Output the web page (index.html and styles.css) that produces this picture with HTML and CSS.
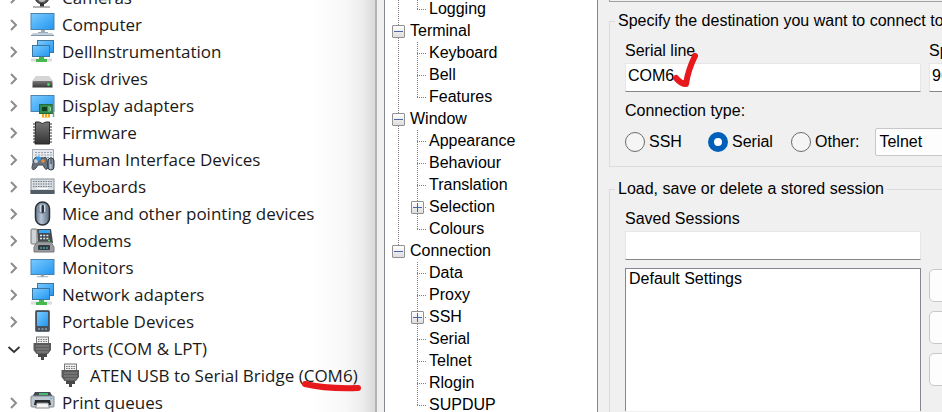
FILE: index.html
```html
<!DOCTYPE html>
<html lang="en">
<head>
<meta charset="utf-8">
<title>Serial port setup</title>
<link rel="stylesheet" href="styles.css">
</head>
<body>
<svg class="defs" aria-hidden="true">
  <defs>
    <linearGradient id="blue" x1="0" y1="0" x2="1" y2="1"><stop offset="0" stop-color="#7ccbff"/><stop offset="1" stop-color="#2196f0"/></linearGradient>
    <linearGradient id="dark" x1="0" y1="0" x2="0" y2="1"><stop offset="0" stop-color="#777"/><stop offset="1" stop-color="#333"/></linearGradient>
    <linearGradient id="steel" x1="0" y1="0" x2="1" y2="0"><stop offset="0" stop-color="#66788e"/><stop offset=".4" stop-color="#b6c4d4"/><stop offset="1" stop-color="#5c6b7e"/></linearGradient>
  </defs>
  <symbol id="chevron" viewBox="0 0 12 14"><path d="M3 2l5 5-5 5" fill="none" stroke="#8c8c8c" stroke-width="2"/></symbol>
  <symbol id="chevron-open" viewBox="0 0 14 14"><path d="M1.500 5l5.500 5 5.500-5" fill="none" stroke="#333" stroke-width="1.800"/></symbol>
  <symbol id="camera" viewBox="0 0 26 26"><circle cx="12" cy="12" r="7" fill="#555" stroke="#333"/><circle cx="12" cy="13" r="4" fill="#bbb"/><path d="M10 18h4v4h-4z" fill="#333"/><path d="M3 22h17" stroke="#999" stroke-width="1.500"/></symbol>
  <symbol id="computer" viewBox="0 0 26 26"><rect x="1" y="1.500" width="23" height="16" fill="url(#blue)" stroke="#4d83ad"/><path d="M11 18h4v2h3v1H8v-1h3z" fill="#9aabb9"/><path d="M3 21h19l2 2H1z" fill="#c3d0dc"/><path d="M1 23.500h23" stroke="#8296a8"/></symbol>
  <symbol id="network" viewBox="0 0 26 26"><rect x="7.500" y="1.500" width="16" height="12" fill="url(#blue)" stroke="#3c759e"/><rect x="2.500" y="6.500" width="17" height="11" fill="url(#blue)" stroke="#3c759e"/><path d="M1 19.500h21v3H1z" fill="#dcdcdc"/><path d="M9 18h5v2h3v3H6v-3h3z" fill="#45b84e"/></symbol>
  <symbol id="disk" viewBox="0 0 26 26"><path d="M6 10h13l4 5H2z" fill="#d5d5d5"/><rect x="2.500" y="15" width="20" height="7" rx="1" fill="url(#dark)"/><path d="M3 21.500h19" stroke="#999"/><circle cx="18.500" cy="18.500" r="1.300" fill="#46ef59"/></symbol>
  <symbol id="display" viewBox="0 0 26 26"><rect x="1" y="2.500" width="23" height="16" fill="url(#blue)" stroke="#4d83ad"/><rect x="9.500" y="11.500" width="13" height="9" fill="#2f8a4d" stroke="#236c3c"/><rect x="12" y="14" width="5" height="4" fill="#143c23"/><path d="M19 13v6M20.500 14v4" stroke="#8fd49f"/><path d="M12 21h8v3.500h-8z" fill="#f0a51c"/><path d="M14.500 21v3M17.500 21v3" stroke="#fff3c9"/><path d="M23.500 9v15" stroke="#8a9099" stroke-width="1.500"/></symbol>
  <symbol id="firmware" viewBox="0 0 26 26"><path d="M3 4h19M3 7h19M3 10h19M3 13h19M3 16h19M3 19h19M3 22h19" stroke="#777" stroke-width="1.500"/><path d="M5.500 2H9q3.500 3 7 0h3.500v22h-14.500z" fill="url(#dark)" stroke="#2b2b2b"/></symbol>
  <symbol id="hid" viewBox="0 0 26 26"><rect x="2.500" y="2.500" width="21" height="12" fill="#e5e9ed" stroke="#a5adb5"/><path d="M5 5.500h17M5 8h17M5 10.500h17" stroke="#9aa3ad" stroke-dasharray="2 1"/><path d="M4 12q2-3 5-1h4q3-2 4 1l1 9q-2 3-4-1l-1-2H8l-2 3q-4 4-4-1z" fill="#69727c" stroke="#434a53"/><circle cx="6" cy="14" r="2" fill="#cbd4dd"/><circle cx="8.500" cy="11.500" r="2.300" fill="#2e9ff2"/><circle cx="13" cy="14" r="1.700" fill="#ef8a35"/><rect x="18" y="11" width="6" height="12" rx="3" fill="url(#steel)" stroke="#303943"/><path d="M21 12v5" stroke="#263340"/></symbol>
  <symbol id="keyboard" viewBox="0 0 26 26"><rect x="1" y="5" width="23" height="14" fill="#d9dee3" stroke="#87919b"/><path d="M3 7.500h20M3 10h20M3 12.500h20" stroke="#717b85" stroke-dasharray="1.500 1"/><path d="M7 14.500h11" stroke="#fff"/><path d="M.5 16h24v4H.5z" fill="#535d67"/></symbol>
  <symbol id="mouse" viewBox="0 0 26 26"><rect x="5.500" y="1" width="14" height="23" rx="7" fill="url(#steel)" stroke="#2d3137" stroke-width="1.500"/><path d="M9 3h7v8q-3.500 3-7 0z" fill="#d3dce5" stroke="#66788a"/><rect x="11.500" y="4" width="2.500" height="8" rx="1" fill="#2b3440"/></symbol>
  <symbol id="modem" viewBox="0 0 26 26"><path d="M7 1h14l2 14H8z" fill="#454b52"/><rect x="1" y="1" width="6" height="15" rx="1" fill="#d0d3d6" stroke="#777"/><rect x="9" y="2" width="11" height="3" fill="#38a6f2"/><path d="M10 7.500h9M10 10.500h9" stroke="#dfe6ec" stroke-width="1.500" stroke-dasharray="2 1.200"/><circle cx="19" cy="12.500" r="1" fill="#51df58"/><path d="M7 14h14l3 5v5H4v-5z" fill="#999da1" stroke="#777"/><rect x="8" y="17" width="12" height="5" rx="1" fill="#353a40"/><path d="M10 20h8" stroke="#4ed2ca" stroke-dasharray="2 1"/></symbol>
  <symbol id="monitor" viewBox="0 0 26 26"><rect x="1" y="4.500" width="23" height="15" fill="url(#blue)" stroke="#4d83ad"/><path d="M11 20h3v1.500h4V22H7v-.5h4z" fill="#8fa3b4" stroke="#aab8c4" stroke-width=".5"/></symbol>
  <symbol id="portable" viewBox="0 0 26 26"><rect x="5.500" y="1.500" width="14" height="21" rx="1" fill="#46505b" stroke="#5f6c79"/><rect x="7" y="3" width="11" height="14" fill="url(#blue)"/><path d="M8 20h2M11.500 20h2M15 20h2" stroke="#c0c9d2"/></symbol>
  <symbol id="port" viewBox="0 0 26 26"><rect x="6.500" y="1" width="12" height="7" fill="#efefef" stroke="#777"/><path d="M8 3.500h9M8 5.500h9" stroke="#777" stroke-dasharray="1.500 1"/><path d="M3.500 7h17.500v7l-3 4H6.500l-3-4z" fill="#5b5b5b"/><path d="M6 10h13M6 13h13M7 16h11" stroke="#8c8c8c"/><path d="M8 18h9v3h-3v3h-3v-3H8z" fill="#484848"/></symbol>
  <symbol id="printer" viewBox="0 0 26 26"><path d="M5 2h15l3 5H2z" fill="#434a50"/><path d="M9 4h9" stroke="#49df82" stroke-width="1.500"/><rect x="1" y="6" width="23" height="11" rx="1" fill="#bfc7ce" stroke="#818b94"/><path d="M5 10h15l1 5H4z" fill="#26292d"/><path d="M7 13h11l1.500 5H5.500z" fill="#f4f4f4" stroke="#888"/><circle cx="21" cy="8.500" r="1" fill="#57b9ee"/></symbol>
</svg>

<main class="screen">
  <section class="devices" aria-label="Devices">
    <ul class="device-list">
      <li><svg class="arrow"><use href="#chevron"/></svg><svg class="icon"><use href="#camera"/></svg><span>Cameras</span></li>
      <li><svg class="arrow"><use href="#chevron"/></svg><svg class="icon"><use href="#computer"/></svg><span>Computer</span></li>
      <li><svg class="arrow"><use href="#chevron"/></svg><svg class="icon"><use href="#network"/></svg><span>DellInstrumentation</span></li>
      <li><svg class="arrow"><use href="#chevron"/></svg><svg class="icon"><use href="#disk"/></svg><span>Disk drives</span></li>
      <li><svg class="arrow"><use href="#chevron"/></svg><svg class="icon"><use href="#display"/></svg><span>Display adapters</span></li>
      <li><svg class="arrow"><use href="#chevron"/></svg><svg class="icon"><use href="#firmware"/></svg><span>Firmware</span></li>
      <li><svg class="arrow"><use href="#chevron"/></svg><svg class="icon"><use href="#hid"/></svg><span>Human Interface Devices</span></li>
      <li><svg class="arrow"><use href="#chevron"/></svg><svg class="icon"><use href="#keyboard"/></svg><span>Keyboards</span></li>
      <li><svg class="arrow"><use href="#chevron"/></svg><svg class="icon"><use href="#mouse"/></svg><span>Mice and other pointing devices</span></li>
      <li><svg class="arrow"><use href="#chevron"/></svg><svg class="icon"><use href="#modem"/></svg><span>Modems</span></li>
      <li><svg class="arrow"><use href="#chevron"/></svg><svg class="icon"><use href="#monitor"/></svg><span>Monitors</span></li>
      <li><svg class="arrow"><use href="#chevron"/></svg><svg class="icon"><use href="#network"/></svg><span>Network adapters</span></li>
      <li><svg class="arrow"><use href="#chevron"/></svg><svg class="icon"><use href="#portable"/></svg><span>Portable Devices</span></li>
      <li><svg class="arrow"><use href="#chevron-open"/></svg><svg class="icon"><use href="#port"/></svg><span>Ports (COM &amp; LPT)</span></li>
      <li class="nested"><svg class="icon"><use href="#port"/></svg><span>ATEN USB to Serial Bridge <span class="marked">(COM6)<svg class="underline" viewBox="0 0 64 12"><path d="M5 4Q25 9 58 8" fill="none" stroke="#e8191c" stroke-width="6" stroke-linecap="round"/></svg></span></span></li>
      <li><svg class="arrow"><use href="#chevron"/></svg><svg class="icon"><use href="#printer"/></svg><span>Print queues</span></li>
    </ul>
  </section>

  <nav class="categories" aria-label="Category">
    <ul class="tree">
      <li class="branch">
        <ul><li>Logging</li></ul>
      </li>
      <li class="branch">
        <div class="node"><button class="toggle" type="button" aria-label="Collapse Terminal"></button>Terminal</div>
        <ul><li>Keyboard</li><li>Bell</li><li>Features</li></ul>
      </li>
      <li class="branch">
        <div class="node"><button class="toggle" type="button" aria-label="Collapse Window"></button>Window</div>
        <ul><li>Appearance</li><li>Behaviour</li><li>Translation</li><li class="folded"><button class="toggle plus" type="button" aria-label="Expand Selection"></button>Selection</li><li>Colours</li></ul>
      </li>
      <li class="branch">
        <div class="node"><button class="toggle" type="button" aria-label="Collapse Connection"></button>Connection</div>
        <ul><li>Data</li><li>Proxy</li><li class="folded"><button class="toggle plus" type="button" aria-label="Expand SSH"></button>SSH</li><li>Serial</li><li>Telnet</li><li>Rlogin</li><li>SUPDUP</li></ul>
      </li>
    </ul>
  </nav>

  <form class="session">
    <div class="banner"></div>
    <fieldset>
      <legend>Specify the destination you want to connect to</legend>
      <div class="columns">
        <div class="field marked">
          <label for="line">Serial line</label>
          <input class="text" id="line" type="text" value="COM6">
          <svg class="tick" viewBox="0 0 28 36"><path d="M4 25Q9 31 14 31Q16 17 23 3" fill="none" stroke="#e8191c" stroke-width="6" stroke-linecap="round" stroke-linejoin="round"/></svg>
        </div>
        <div class="field">
          <label for="speed">Speed</label>
          <input class="text" id="speed" type="text" value="9600">
        </div>
      </div>
      <div class="caption">Connection type:</div>
      <div class="choices">
        <label><input type="radio" name="type">SSH</label>
        <label><input type="radio" name="type" checked>Serial</label>
        <label><input type="radio" name="type">Other:</label>
        <select aria-label="Other connection type"><option>Telnet</option></select>
      </div>
    </fieldset>
    <fieldset class="stored">
      <legend>Load, save or delete a stored session</legend>
      <div class="columns">
        <div class="field">
          <label for="saved">Saved Sessions</label>
          <input class="text" id="saved" type="text">
        </div>
      </div>
      <div class="columns lists">
        <select class="sessions" size="6" aria-label="Stored sessions"><option>Default Settings</option></select>
        <div class="actions">
          <button type="button" aria-label="Load"></button>
          <button type="button" aria-label="Save"></button>
          <button type="button" aria-label="Delete"></button>
        </div>
      </div>
    </fieldset>
  </form>
</main>
</body>
</html>
```
FILE: styles.css
```css
* { box-sizing: border-box; }
body { margin: 0; color: #000; background: #fff; font: 16px/22px "Liberation Sans", Arial, sans-serif; }
ul { list-style: none; margin: 0; padding: 0; }
input, select, button { font: inherit; color: inherit; margin: 0; }
.defs { position: absolute; width: 0; height: 0; }

.screen {
  display: grid;
  grid-template-columns: minmax(0, 377fr) minmax(0, 221fr) minmax(0, 344fr);
  height: 100vh;
  overflow: hidden;
  background: #f0f0f0;
}
.screen > * { min-height: 0; overflow: hidden; }

/* Device list */
.devices {
  border-right: 2px solid #b4b4b4;
  background: linear-gradient(to left, #d9d9d9, #ececec 12px, #f8f8f8 30px, #fff 64px);
  font: 17px/27px "Open Sans", "Segoe UI", sans-serif;
  color: #1a1a1a;
}
.device-list { margin-top: -16px; }
.device-list li { display: flex; align-items: center; height: 27px; padding-left: 7px; white-space: nowrap; }
.device-list .nested { padding-left: 58px; }
.arrow { width: 14px; height: 14px; margin-right: 9px; flex: none; }
.icon { width: 26px; height: 26px; margin-right: 6px; flex: none; }
.marked { position: relative; }
.underline { position: absolute; right: -6px; bottom: -5px; width: 64px; height: 12px; }

/* Category tree */
.categories { margin-left: 7px; border: solid #828790; border-width: 0 1px; background: #fff; }
.tree { margin-top: -2px; }
.branch {
  background: repeating-linear-gradient(#808080 0 1px, transparent 1px 2px) 13px 0 / 1px 100% no-repeat;
}
.branch:last-child { background-size: 1px 12px; }
.node { display: flex; align-items: center; gap: 5px; height: 22px; padding-left: 7px; }
.branch ul li {
  display: flex;
  align-items: center;
  height: 22px;
  padding-left: 44px;
  background:
    repeating-linear-gradient(#808080 0 1px, transparent 1px 2px) 32px 0 / 1px 100% no-repeat,
    repeating-linear-gradient(90deg, #808080 0 1px, transparent 1px 2px) 32px 11px / 9px 1px no-repeat;
}
.branch ul li:last-child { background-size: 1px 12px, 9px 1px; }
.branch ul .folded { gap: 5px; padding-left: 26px; }
.toggle {
  width: 13px;
  height: 13px;
  padding: 0;
  border: 1px solid #919191;
  border-radius: 1px;
  background:
    linear-gradient(#4b63a7, #4b63a7) center / 9px 1px no-repeat,
    linear-gradient(#fff, #ddd);
}
.toggle.plus {
  background:
    linear-gradient(#4b63a7, #4b63a7) center / 9px 1px no-repeat,
    linear-gradient(#4b63a7, #4b63a7) center / 1px 9px no-repeat,
    linear-gradient(#fff, #ddd);
}

/* Session form */
.session { padding-left: 11px; white-space: nowrap; }
.banner { height: 2px; margin-bottom: 8px; border-bottom: 1px solid #a0a0a0; border-left: 1px solid #a0a0a0; }
fieldset { min-width: 0; margin: 0 -110px 0 0; padding: 0 15px 10px; border: 1px solid #dcdcdc; }
legend { margin-left: -10px; padding: 0 3px; }
.columns { display: grid; grid-template-columns: minmax(0, 1fr) 107px; gap: 8px; }
.field { display: flex; flex-direction: column; gap: 1px; padding-top: 8px; }
.text { width: 100%; height: 29px; padding: 0 2px 3px; border: 1px solid #e6e6e6; border-bottom-color: #868686; background: #fff; }
.tick { position: absolute; left: 47px; top: 21px; width: 28px; height: 36px; }
.caption { margin-top: 8px; }
.choices { display: flex; align-items: center; gap: 16px; margin-top: 6px; }
.choices label { display: flex; align-items: center; gap: 4px; min-width: 67px; }
.choices input { appearance: none; width: 20px; height: 20px; border: 1px solid #6b6b6b; border-radius: 50%; background: #f5f5f5; }
.choices input:checked { border: 6px solid #005fb8; background: #fff; }
.choices select { appearance: none; width: 160px; height: 28px; padding: 0 3px; border: 1px solid #c8c8c8; border-radius: 2px; background: #fdfdfd; }
.stored { margin-top: 11px; }
.lists { margin-top: 8px; }
.sessions { height: 143px; padding: 1px 0; border: 1px solid #828790; border-bottom: 0; border-radius: 0; background: #fff; overflow: hidden; }
.sessions option { padding: 0 3px; min-height: 22px; line-height: 22px; }
.actions { display: flex; flex-direction: column; gap: 9px; padding-top: 1px; }
.actions button { height: 33px; border: 1px solid #c8c8c8; border-radius: 5px; background: #fdfdfd; }
```
